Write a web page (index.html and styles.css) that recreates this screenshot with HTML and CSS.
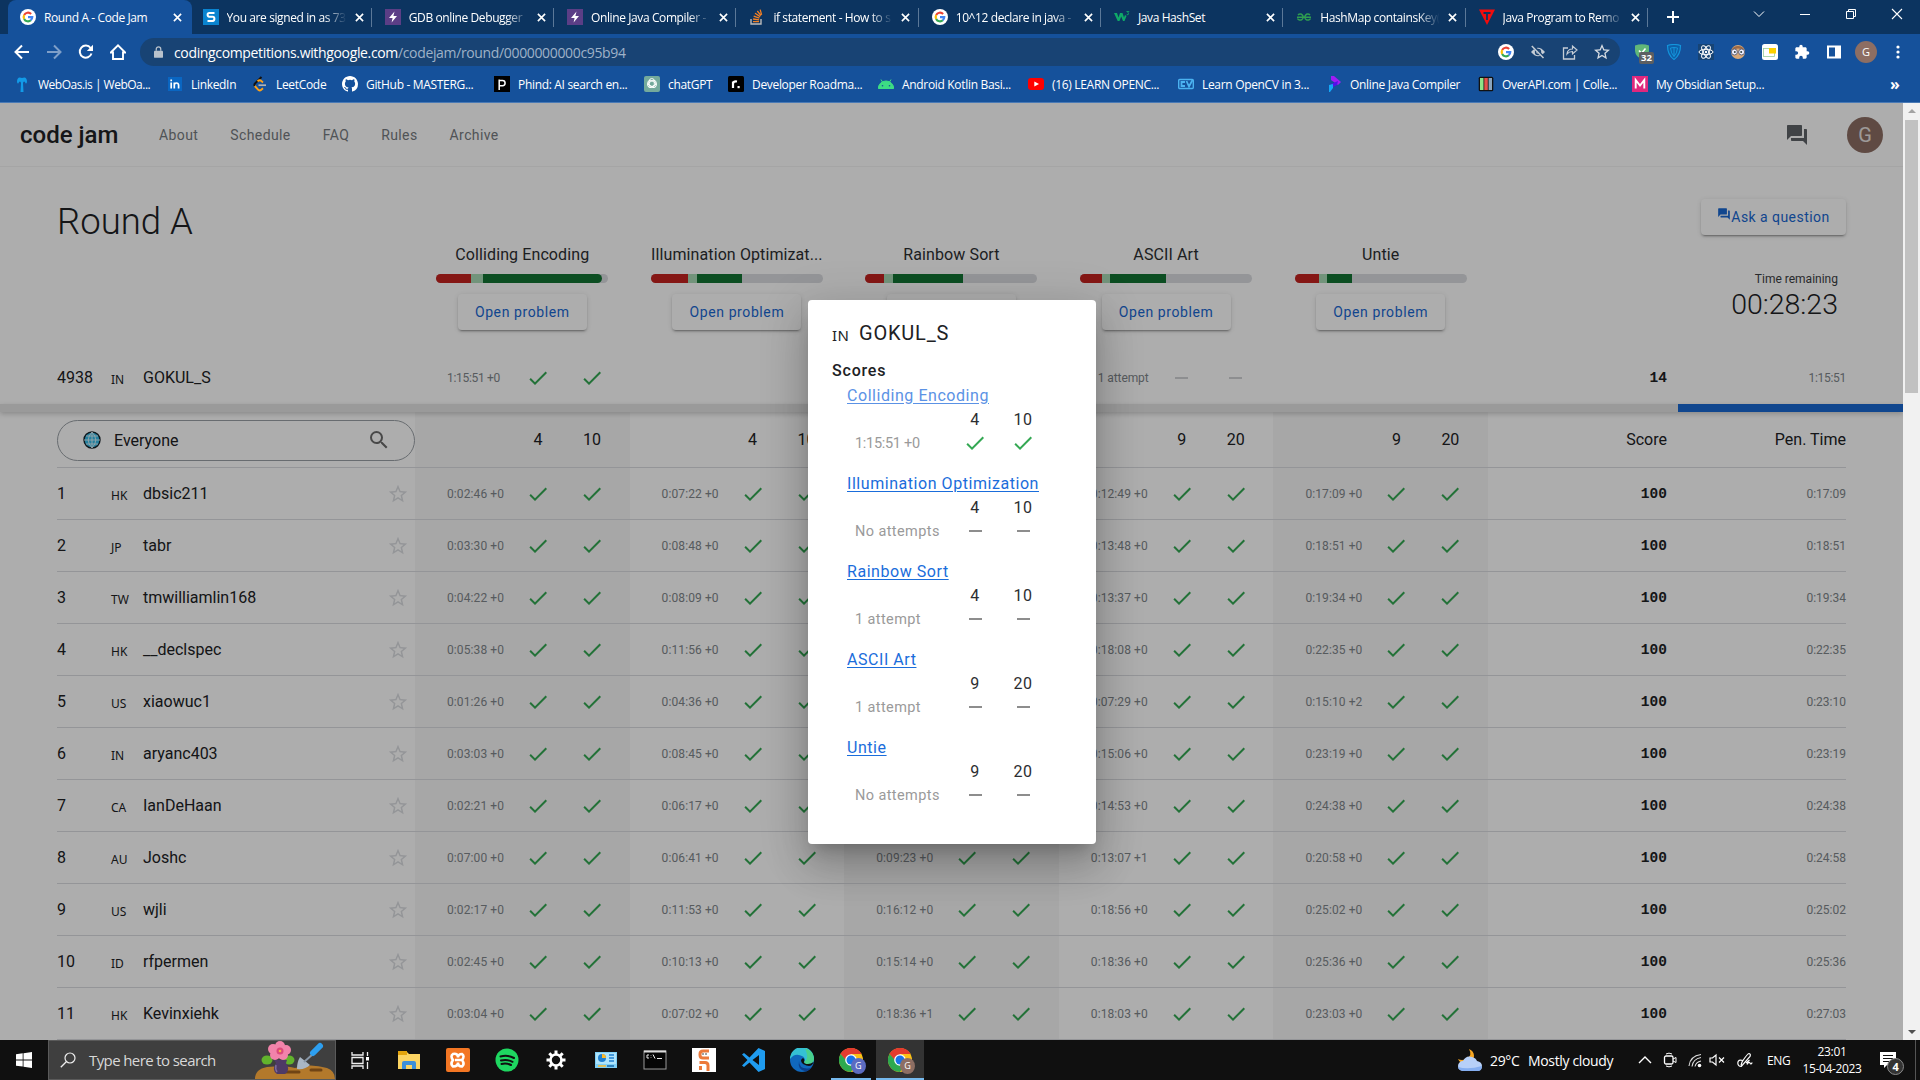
FILE: index.html
```html
<!DOCTYPE html>
<html lang="en">
<head>
<meta charset="utf-8">
<title>Round A - Code Jam</title>
<link rel="stylesheet" href="styles.css">
</head>
<body>
<svg class="sprite" aria-hidden="true">
  <symbol id="google" viewBox="0 0 20 20"><circle cx="10" cy="10" r="10" fill="#fff"/><g fill="none" stroke-width="2.7"><path d="M5.2 7.6A5.4 5.4 0 0 1 13.9 6.2" stroke="#ea4335"/><path d="M5.2 12.4A5.4 5.4 0 0 1 5.2 7.6" stroke="#fbbc05"/><path d="M13.6 14A5.4 5.4 0 0 1 5.2 12.4" stroke="#34a853"/><path d="M10 10.2h5.3A5.4 5.4 0 0 1 13.4 14.1" stroke="#4285f4"/></g></symbol>
  <symbol id="close" viewBox="0 0 10 10"><path d="M1 1l8 8M9 1L1 9" stroke="#fff" stroke-width="1.8"/></symbol>
  <symbol id="bolt" viewBox="0 0 16 16"><rect width="16" height="16" fill="#5b3e86"/><path d="M9.5 2.5L4 9h3.6l-1 4.5L12 7H8.4z" fill="#fff"/></symbol>
  <symbol id="check" viewBox="0 0 24 24"><path d="M9 16.17L4.83 12l-1.42 1.41L9 19 21 7l-1.41-1.41z" fill="#34a853"/></symbol>
  <symbol id="star" viewBox="0 0 24 24"><path d="M22 9.24l-7.19-.62L12 2 9.19 8.63 2 9.24l5.46 4.73L5.82 21 12 17.27 18.18 21l-1.63-7.03L22 9.24zM12 15.4l-3.76 2.27 1-4.28-3.32-2.88 4.38-.38L12 6.1l1.71 4.04 4.38.38-3.32 2.88 1 4.28L12 15.4z"/></symbol>
  <symbol id="chat" viewBox="0 0 24 24"><path d="M21 6h-2v9H6v2c0 .55.45 1 1 1h11l4 4V7c0-.55-.45-1-1-1zm-4 6V3c0-.55-.45-1-1-1H3c-.55 0-1 .45-1 1v14l4-4h10c.55 0 1-.45 1-1z"/></symbol>
  <symbol id="chrome" viewBox="0 0 24 24"><circle cx="12" cy="12" r="12" fill="#fbc116"/><path d="M12 12L1.6 6A12 12 0 0 1 22.4 6H12z" fill="#ea4335"/><path d="M12 0A12 12 0 0 1 22.4 6H12L6 12 1.6 6A12 12 0 0 1 12 0z" fill="#e33b2e"/><path d="M1.6 6A12 12 0 0 0 12 24l5.2-9L12 12H6.8z" fill="#2da94f"/><circle cx="12" cy="12" r="5.8" fill="#fff"/><circle cx="12" cy="12" r="4.5" fill="#1a73e8"/></symbol>
</svg>

<header class="browser">
  <div class="tabstrip">
    <div class="tab active"><svg class="fav"><use href="#google"/></svg><span class="tab-title">Round A - Code Jam</span><svg class="x"><use href="#close"/></svg></div>
    <div class="tab nosep"><svg class="fav" viewBox="0 0 16 16"><rect width="16" height="16" fill="#0a84d0"/><path d="M11.5 4H6.3Q4.6 4 4.6 5.8T6.3 7.8H9.7Q11.4 7.8 11.4 9.8T9.7 12H4.5" fill="none" stroke="#fff" stroke-width="2"/></svg><span class="tab-title fade">You are signed in as 73</span><svg class="x"><use href="#close"/></svg></div>
    <div class="tab"><svg class="fav"><use href="#bolt"/></svg><span class="tab-title fade">GDB online Debugger</span><svg class="x"><use href="#close"/></svg></div>
    <div class="tab"><svg class="fav"><use href="#bolt"/></svg><span class="tab-title fade">Online Java Compiler -</span><svg class="x"><use href="#close"/></svg></div>
    <div class="tab"><svg class="fav" viewBox="0 0 16 16"><path d="M2 10v5h10v-5" fill="none" stroke="#bcbbbb" stroke-width="1.4"/><path d="M4 12.7h6M4.1 10l6 .9M4.7 7.2l5.7 2M6 4.300l5.200 3.300M8.300 2l3.700 4.500M11.200.6l1.400 5.200" stroke="#f48024" stroke-width="1.300"/></svg><span class="tab-title fade">if statement - How to s</span><svg class="x"><use href="#close"/></svg></div>
    <div class="tab"><svg class="fav"><use href="#google"/></svg><span class="tab-title fade">10^12 declare in java -</span><svg class="x"><use href="#close"/></svg></div>
    <div class="tab"><svg class="fav" viewBox="0 0 16 16"><path d="M0 4h3l1.500 4.500L6 4h2.500L10 8.500 11 6l1.500 1-2 5H9L7.200 7.500 5.500 12H3.700z" fill="#0fa968"/><path d="M12.500 2.500h2.400l-1.200 1.400q1.500.4.500 1.700l-1.500.2" fill="none" stroke="#0fa968" stroke-width=".9"/></svg><span class="tab-title">Java HashSet</span><svg class="x"><use href="#close"/></svg></div>
    <div class="tab"><svg class="fav" viewBox="0 0 16 16"><g fill="none" stroke="#2f9e50" stroke-width="1.500"><path d="M2 6A3 3 0 1 1 1.500 9.500M1 8.300h14M14 6A3 3 0 1 0 14.500 9.500"/></g></svg><span class="tab-title fade">HashMap containsKey(</span><svg class="x"><use href="#close"/></svg></div>
    <div class="tab"><svg class="fav" viewBox="0 0 16 16"><path d="M0 .5h16L8 16z" fill="#f20c0c"/><path d="M4.500 4h7M8 4v7" stroke="#0c3460" stroke-width="1.800"/></svg><span class="tab-title fade">Java Program to Remo</span><svg class="x"><use href="#close"/></svg></div>
    <svg class="newtab" viewBox="0 0 14 14"><path d="M7 1v12M1 7h12" stroke="#fff" stroke-width="2"/></svg>
    <div class="wincontrols">
      <svg viewBox="0 0 12 12"><path d="M1 3.500l5 5 5-5" fill="none" stroke="#fff"/></svg>
      <svg viewBox="0 0 12 12"><path d="M1 6.500h10" stroke="#fff"/></svg>
      <svg viewBox="0 0 12 12"><path d="M1.500 3.500h7v7h-7zM3.500 3.500v-2h7v7h-2" fill="none" stroke="#fff"/></svg>
      <svg viewBox="0 0 12 12"><path d="M1 1l10 10M11 1L1 11" stroke="#fff" stroke-width="1.100"/></svg>
    </div>
  </div>
  <div class="toolbar">
    <div class="navicons">
      <svg viewBox="0 0 16 16"><path d="M15 8H2M8 1.500L1.500 8 8 14.500" fill="none" stroke="#fff" stroke-width="2"/></svg>
      <svg viewBox="0 0 16 16" class="dim"><path d="M1 8h13M8 1.500L14.500 8 8 14.500" fill="none" stroke="#fff" stroke-width="2"/></svg>
      <svg viewBox="0 0 16 16"><path d="M13.500 9.500A6 6 0 1 1 12.600 4" fill="none" stroke="#fff" stroke-width="2"/><path d="M15 .8V7H8.800z" fill="#fff"/></svg>
      <svg viewBox="0 0 16 16"><path d="M.8 8.500L8 1.400l7.200 7.100H13V15H3V8.500z" fill="none" stroke="#fff" stroke-width="1.900"/></svg>
    </div>
    <div class="omnibox">
      <svg class="lock" viewBox="0 0 10 13"><rect y="5" width="10" height="8" rx="1" fill="#b9c2cc"/><path d="M2.500 5V3.300a2.500 2.500 0 0 1 5 0V5" fill="none" stroke="#b9c2cc" stroke-width="1.400"/></svg>
      <span class="url"><b>codingcompetitions.withgoogle.com</b>/codejam/round/0000000000c95b94</span>
      <svg class="o" viewBox="0 0 16 16"><use href="#google"/></svg>
      <svg class="o" viewBox="0 0 16 16"><path d="M1 8Q8-.5 15 8Q8 16.500 1 8z" fill="#c5cdd6"/><circle cx="8" cy="8" r="3.200" fill="#18416f"/><circle cx="8" cy="8" r="1.800" fill="#c5cdd6"/><path d="M2 1l12.500 13.500" stroke="#18416f" stroke-width="3"/><path d="M1.800 2l11.700 12" stroke="#c5cdd6" stroke-width="1.500"/></svg>
      <svg class="o" viewBox="0 0 16 16"><path d="M6 4H1.500v11h11v-4" fill="none" stroke="#c5cdd6" stroke-width="1.300"/><path d="M5 10Q5.500 5 10.500 5V2L15 6l-4.500 4V7.500Q7 7.500 5 10z" fill="none" stroke="#c5cdd6" stroke-width="1.200"/></svg>
      <svg class="o star" viewBox="2 2 20 20"><use href="#star" width="24" height="24" fill="#d5dbe2"/></svg>
    </div>
    <div class="extensions">
      <span class="ext"><svg viewBox="0 0 16 16"><path d="M1 1.500Q8-1 15 1.500V7Q14.500 12.500 8 15.500Q1.500 12.500 1 7z" fill="#61b778"/><path d="M5 6.500l2.500 2.800L11.500 4.500" fill="none" stroke="#fff" stroke-width="1.600"/></svg><i class="count">32</i></span>
      <svg viewBox="0 0 16 16"><path d="M1.500 1.500Q8-.5 14.500 1.500Q14.500 11 8 15.500Q1.500 11 1.500 1.500z" fill="#0d5fa8" stroke="#1495dc" stroke-width="1.200"/><path d="M4.500 4Q8 3 11.500 4Q11 9.500 8 12.500Q5 9.500 4.500 4zM8 3.500v9" fill="none" stroke="#1495dc"/></svg>
      <svg viewBox="0 0 16 16"><rect width="16" height="16" fill="#174475"/><g fill="none" stroke="#fff"><ellipse cx="8" cy="8" rx="7" ry="2.700"/><ellipse cx="8" cy="8" rx="7" ry="2.700" transform="rotate(60 8 8)"/><ellipse cx="8" cy="8" rx="7" ry="2.700" transform="rotate(120 8 8)"/></g><circle cx="8" cy="8" r="1.200" fill="#fff"/></svg>
      <svg viewBox="0 0 16 16"><circle cx="8" cy="8" r="7" fill="#d8a878"/><path d="M1.500 6A7 6.500 0 0 1 14.500 6Q8 3 1.500 6z" fill="#9b6a48"/><circle cx="4.400" cy="8" r="3" fill="#eef" stroke="#667"/><circle cx="11.600" cy="8" r="3" fill="#eef" stroke="#667"/><circle cx="4.800" cy="8" r="1" fill="#344"/><circle cx="11.200" cy="8" r="1" fill="#344"/></svg>
      <svg viewBox="0 0 16 16"><rect width="16" height="16" rx="2.500" fill="#fff"/><rect x="1.500" y="4.500" width="11" height="8" fill="none" stroke="#9c9" stroke-width=".8"/><rect x="7" y="4" width="7" height="5.500" fill="#fbd000"/></svg>
      <svg viewBox="0 0 24 24"><path d="M20.500 11H19V7c0-1.100-.9-2-2-2h-4V3.500a2.500 2.500 0 0 0-5 0V5H4c-1.100 0-2 .9-2 2v3.800h1.500a2.700 2.700 0 0 1 0 5.400H2V20c0 1.100.9 2 2 2h3.800v-1.500a2.700 2.700 0 0 1 5.400 0V22H17c1.100 0 2-.9 2-2v-4h1.500a2.500 2.500 0 0 0 0-5z" fill="#fff"/></svg>
      <svg viewBox="0 0 16 16"><path d="M1 1.500h14v13H1zM3 3.500v9h6v-9z" fill="#fff" fill-rule="evenodd"/></svg>
      <span class="profile">G</span>
      <svg viewBox="0 0 16 16"><g fill="#fff"><circle cx="8" cy="3" r="1.600"/><circle cx="8" cy="8" r="1.600"/><circle cx="8" cy="13" r="1.600"/></g></svg>
    </div>
  </div>
  <nav class="bookmarks">
    <span class="bm first"><svg viewBox="0 0 16 16"><path d="M3 6Q3 0 8 2Q13 0 13 6Q12 9 11 6Q9.500 4.500 9 7L9.500 16H6.500L7 7Q6.500 4.500 5 6Q4 9 3 6z" fill="#129be8"/></svg>WebOas.is | WebOa...</span>
    <span class="bm"><svg viewBox="0 0 16 16"><rect x="1" y="1" width="14" height="14" fill="#0a66c2"/><path d="M4.200 6.500v6M7.300 12.500v-6M7.300 9q.3-2 2.200-2t2.100 2.200v3.300M4.200 3.500v1.800" fill="none" stroke="#fff" stroke-width="1.700"/></svg>LinkedIn</span>
    <span class="bm"><svg viewBox="0 0 16 16"><path d="M9.500 1L3 7.500q-1.200 1.300-.2 2.500" fill="none" stroke="#111" stroke-width="1.900"/><path d="M2.800 10l3.500 3.800q1.500 1.300 3 0l1.700-1.500M5.500 5.200q2.500-2 4 0l1.500 1.200" fill="none" stroke="#ffa116" stroke-width="1.900"/><path d="M6.500 9.200H14" stroke="#b3b3b3" stroke-width="1.700"/></svg>LeetCode</span>
    <span class="bm"><svg viewBox="0 0 16 16"><path d="M8 0C3.580 0 0 3.580 0 8c0 3.540 2.290 6.530 5.470 7.590.4.070.55-.17.55-.38 0-.19-.01-.82-.01-1.490-2.010.37-2.530-.49-2.690-.94-.09-.23-.48-.94-.82-1.130-.28-.15-.68-.52-.01-.53.63-.01 1.080.58 1.230.82.72 1.210 1.870.87 2.330.66.07-.52.28-.87.51-1.070-1.780-.2-3.640-.89-3.640-3.950 0-.87.31-1.590.82-2.150-.08-.2-.36-1.020.08-2.120 0 0 .67-.21 2.200.82a7.600 7.600 0 0 1 4 0c1.530-1.040 2.200-.82 2.200-.82.44 1.100.16 1.920.08 2.120.51.56.82 1.270.82 2.150 0 3.070-1.870 3.750-3.650 3.950.29.25.54.73.54 1.480 0 1.070-.01 1.930-.01 2.200 0 .21.15.46.55.38A8 8 0 0 0 16 8c0-4.420-3.580-8-8-8z" fill="#fff"/></svg>GitHub - MASTERG...</span>
    <span class="bm"><svg viewBox="0 0 16 16"><rect width="16" height="16" fill="#000"/><path d="M5.200 14V3.500M5.200 4.500H8.500a2.600 2.600 0 0 1 0 5.200H5.200" fill="none" stroke="#fff" stroke-width="1.500"/></svg>Phind: AI search en...</span>
    <span class="bm"><svg viewBox="0 0 16 16"><rect width="16" height="16" rx="2" fill="#74aa9c"/><g fill="none" stroke="#fff" stroke-width=".9"><rect x="5.300" y="2.500" width="5" height="9" rx="2.500"/><rect x="5.300" y="3.500" width="5" height="9" rx="2.500" transform="rotate(60 8 8)"/><rect x="5.300" y="3.500" width="5" height="9" rx="2.500" transform="rotate(120 8 8)"/></g></svg>chatGPT</span>
    <span class="bm"><svg viewBox="0 0 16 16"><rect width="16" height="16" rx="1.500" fill="#000"/><path d="M5 12V5.500M5 7.500Q5.500 5 9 5.500" fill="none" stroke="#fff" stroke-width="2.200"/><rect x="9.500" y="10" width="2.200" height="2.200" fill="#fff"/></svg>Developer Roadma...</span>
    <span class="bm"><svg viewBox="0 0 16 16"><path d="M.3 12.500A7.700 7.500 0 0 1 15.700 12.500zM3 3.500l2.300 4M13 3.500l-2.300 4" fill="#3ddc84" stroke="#3ddc84"/><circle cx="4.500" cy="9.800" r=".8" fill="#15519b"/><circle cx="11.500" cy="9.800" r=".8" fill="#15519b"/></svg>Android Kotlin Basi...</span>
    <span class="bm"><svg viewBox="0 0 16 16"><rect y="2" width="16" height="12" rx="3" fill="#f00"/><path d="M6.300 5.400L11 8l-4.700 2.600z" fill="#fff"/></svg>(16) LEARN OPENC...</span>
    <span class="bm"><svg viewBox="0 0 16 16"><rect x=".7" y="3.500" width="14.600" height="9" rx="1" fill="none" stroke="#4bb2f0" stroke-width="1.400"/><path d="M7 6H3.500v4H7M8.500 5l2.500 5.500L14.500 4" fill="none" stroke="#4bb2f0" stroke-width="1.800"/></svg>Learn OpenCV in 3...</span>
    <span class="bm"><svg viewBox="0 0 16 16"><path d="M5 0h3l7 6-3 3-7-5z" fill="#a01cf5"/><path d="M12 5l-1 4-6 3 0-4z" fill="#5410e8"/><path d="M3 9l4-1v4l-3 4H3z" fill="#14a7f7"/></svg>Online Java Compiler</span>
    <span class="bm"><svg viewBox="0 0 16 16"><rect x=".7" y=".7" width="14.600" height="14.600" rx="1.500" fill="#111"/><path fill="#8fe388" d="M2 2h3.500v12H2z"/><path fill="#e2504a" d="M6.300 2h3.500v12H6.300z"/><path fill="#8aa4bd" d="M10.600 2H14v12h-3.400z"/></svg>OverAPI.com | Colle...</span>
    <span class="bm"><svg viewBox="0 0 16 16"><rect width="16" height="16" fill="#e0287d"/><path d="M3.700 12.500V4L8 9.500 12.300 4v8.500" fill="none" stroke="#fff" stroke-width="1.900"/></svg>My Obsidian Setup...</span>
    <span class="more">»</span>
  </nav>
</header>

<main class="viewport">
  <div class="page">
    <header class="siteheader">
      <span class="logo">code jam</span>
      <nav class="sitenav"><a>About</a><a>Schedule</a><a>FAQ</a><a>Rules</a><a>Archive</a></nav>
      <svg class="chaticon"><use href="#chat"/></svg>
      <span class="avatar">G</span>
    </header>

    <section class="roundhead">
      <div class="grid summary">
        <h1>Round A</h1>
        <div class="problem"><span class="pname">Colliding Encoding</span><div class="bar round-end"><i class="wrong"></i><i class="part"></i><i class="full"></i></div><button>Open problem</button></div>
        <div class="problem"><span class="pname">Illumination Optimizat...</span><div class="bar b2"><i class="wrong"></i><i class="part"></i><i class="full"></i></div><button>Open problem</button></div>
        <div class="problem"><span class="pname">Rainbow Sort</span><div class="bar b3"><i class="wrong"></i><i class="part"></i><i class="full"></i></div><button>Open problem</button></div>
        <div class="problem"><span class="pname">ASCII Art</span><div class="bar b4"><i class="wrong"></i><i class="part"></i><i class="full"></i></div><button>Open problem</button></div>
        <div class="problem"><span class="pname">Untie</span><div class="bar b5"><i class="wrong"></i><i class="part"></i><i class="full"></i></div><button>Open problem</button></div>
        <div class="clock">
          <button class="ask"><svg><use href="#chat"/></svg>Ask a question</button>
          <span class="remaining">Time remaining</span>
          <span class="countdown">00:28:23</span>
        </div>
      </div>
      <div class="grid me" id="me"></div>
    </section>
    <div class="timeline"><i></i></div>

    <section class="board" id="board">
      <div class="grid row head">
        <div class="filter">
          <svg class="globe" viewBox="0 0 18 18"><circle cx="9" cy="9" r="8" fill="#35bdea" stroke="#16222a" stroke-width="1.400"/><path d="M9 1v16M1 9h16M3 5h12M3 13h12M9 1Q1.500 9 9 17M9 1Q16.500 9 9 17" fill="none" stroke="#dff4fb" stroke-width=".9"/></svg>
          <span>Everyone</span>
          <svg class="mag" viewBox="0 0 24 24"><path d="M15.500 14h-.79l-.28-.27A6.470 6.470 0 0 0 16 9.500 6.500 6.500 0 1 0 9.500 16c1.610 0 3.090-.59 4.230-1.570l.27.28v.79l5 4.990L20.490 19l-4.990-5zm-6 0C7.010 14 5 11.990 5 9.500S7.010 5 9.500 5 14 7.010 14 9.500 11.990 14 9.500 14z" fill="#6b6b6b"/></svg>
        </div>
        <div class="cell shade"><span></span><b>4</b><b>10</b></div>
        <div class="cell"><span></span><b>4</b><b>10</b></div>
        <div class="cell shade"><span></span><b>4</b><b>10</b></div>
        <div class="cell"><span></span><b>9</b><b>20</b></div>
        <div class="cell shade"><span></span><b>9</b><b>20</b></div>
        <div class="right">Score</div>
        <div class="right">Pen. Time</div>
      </div>
    </section>
    <div class="backdrop"></div>
    <section class="dialog">
      <h2><small>IN</small>GOKUL_S</h2>
      <h3>Scores</h3>
      <div id="scores"></div>
    </section>
  </div>
  <div class="scrollbar"><i class="up"></i><i class="thumb"></i><i class="down"></i></div>
</main>

<footer class="taskbar">
  <div class="start"><svg viewBox="0 0 16 16"><path d="M0 2.300L6.700 1.300v6.200H0zM7.500 1.200L16 0v7.500H7.500zM0 8.400h6.700v6.200L0 13.700zM7.500 8.400H16V16l-8.500-1.200z" fill="#fff"/></svg></div>
  <div class="search">
    <svg class="sicon" viewBox="0 0 16 16"><circle cx="10" cy="6" r="5" fill="none" stroke="#eee" stroke-width="1.200"/><path d="M6.500 9.500L.8 15.200" stroke="#eee" stroke-width="1.300"/></svg>
    <span>Type here to search</span>
    <svg class="art" viewBox="0 0 80 38"><path d="M0 38Q0 28 12 26Q30 24 40 27Q55 22 72 27Q80 30 80 38z" fill="#b3792b"/><path d="M30 31h14M56 29h10" stroke="#704414" stroke-width="3" stroke-linecap="round"/><ellipse cx="12" cy="19" rx="5.500" ry="4.500" fill="#62b32c"/><ellipse cx="34" cy="19" rx="5.500" ry="4.500" fill="#62b32c"/><path d="M19 19h13l-1 3q5 7-1 11h-8q-6-4-1-11z" fill="#4e3a66"/><path d="M21 24q-1 4 1 7" stroke="#7d6a9c" stroke-width="1.500" fill="none"/><g fill="#f283aa"><circle cx="18" cy="8" r="5"/><circle cx="25" cy="5" r="5"/><circle cx="31" cy="9" r="5"/><circle cx="28" cy="14" r="5"/><circle cx="20" cy="14" r="5"/></g><circle cx="25" cy="10" r="3.500" fill="#dc4a7c"/><circle cx="25" cy="10" r="1.300" fill="#f8b04a"/><path d="M45 16l10 8q-5 5-13 4 0-7 3-12z" fill="#a9b6c4"/><path d="M49 21L58 13" stroke="#8998a8" stroke-width="2"/><path d="M58 12l7-7" stroke="#2d9ff0" stroke-width="6" stroke-linecap="round"/></svg>
  </div>
  <div class="apps">
    <span><svg viewBox="0 0 24 24"><path d="M4 4v3h11V4M4 21v-3h11v3M4 9.500h11v6H4zM19.500 4v4M19.500 14v7" fill="none" stroke="#eee" stroke-width="1.300"/><rect x="18" y="9" width="3" height="3.500" fill="#fff"/></svg></span>
    <span><svg viewBox="0 0 24 24"><path d="M1 4h9l2 2h11v15H1z" fill="#fcd462"/><path d="M1 3h9v4H1z" fill="#e3a40d"/><path d="M5 21v-6q0-2 2-2h10q2 0 2 2v6h-4v-4H9v4z" fill="#3d8fd8"/></svg></span>
    <span><svg viewBox="0 0 24 24"><rect width="24" height="24" rx="2" fill="#f37623"/><path d="M7 6q5-1 5 3.500Q12 6 16 6q3 2 0 6 3 4 0 6.500-4 0-4-4 0 4-5 4-3-2.500 0-6.500-3-4 0-6zM9 12h6" fill="none" stroke="#fff" stroke-width="2.600"/></svg></span>
    <span><svg viewBox="0 0 24 24"><circle cx="12" cy="12" r="11.500" fill="#1ed760"/><path d="M5.500 8.500q7-2 13.500 1.500M6 12.500q6-1.700 11.500 1.300M6.500 16q5-1.300 9.500 1" fill="none" stroke="#101010" stroke-width="2" stroke-linecap="round"/></svg></span>
    <span><svg viewBox="0 0 24 24"><circle cx="12" cy="12" r="5.500" fill="none" stroke="#fff" stroke-width="2.600"/><path d="M12 2.500v4M12 17.500v4M2.500 12h4M17.500 12h4M5.300 5.300L8 8M16 16l2.700 2.700M18.700 5.300L16 8M8 16l-2.700 2.700" stroke="#fff" stroke-width="3"/></svg></span>
    <span><svg viewBox="0 0 24 24"><rect x="1" y="4" width="22" height="16" fill="#7fd0f7"/><path d="M2 5h20v11H2z" fill="#aee4fc"/><circle cx="8" cy="10" r="4" fill="#1f7fd0"/><path d="M8 10V6a4 4 0 0 1 4 4z" fill="#fbb929"/><path d="M15 7h5M15 10h5M15 13h5" stroke="#1f7fd0" stroke-width="1.500"/><path d="M4 18h8" stroke="#fbb929" stroke-width="1.500"/><path d="M13 18h7" stroke="#1769aa" stroke-width="1.500"/></svg></span>
    <span><svg viewBox="0 0 24 24"><rect x="1" y="3" width="22" height="18" fill="#050505" stroke="#999"/><path d="M1 3.500h22" stroke="#ddd" stroke-width="2"/><path d="M6 7H4v3h2M8 7.500v.5M8 9.500v.5M10 6.500l2 4M14 10.500h5" fill="none" stroke="#eee"/></svg></span>
    <span><svg viewBox="0 0 24 24"><rect width="24" height="24" fill="#fff"/><g fill="none" stroke="#ec7a3b" stroke-width="3"><path d="M17 3H11q-3 0-3 3v1q0 3 3 3h6"/><path d="M7.500 14.500H13q3 0 3 3V23M8.500 18v4"/></g><path d="M11 5v2M14 5v2" stroke="#444"/></svg></span>
    <span><svg viewBox="0 0 24 24"><path d="M17.500 0L24 3v18l-6.500 3-9-9.500L3 19l-2-1.500L6.500 12 1 6.500 3 5l5.500 4.500zM18 7l-6.500 5 6.500 5z" fill="#1f9cf0" fill-rule="evenodd"/></svg></span>
    <span><svg viewBox="0 0 24 24"><circle cx="12" cy="12" r="12" fill="#1068bd"/><path d="M0 11A12 12 0 0 1 24 11q0 5-6 5-4 0-4-2 2-3-1-5.500Q5 4 0 11z" fill="#35c1d4"/><path d="M15 .5Q24 3 24 11q0 5-6 5-4 0-4-2 6-3 1-13.500z" fill="#52d66c" opacity=".7"/><path d="M9 13q0 8 9 7.500 3-.5 4-1.500-2 3-6 4.500Q7 22 9 13z" fill="#0b3f8c"/><path d="M13 16Q9 12 13 10q2 1 1 4 0 2 4 2 3 0 5.500-2-2 7-10.500 2z" fill="#101010"/></svg></span>
    <span class="open"><svg><use href="#chrome"/></svg><i class="who">G</i></span>
    <span class="open current"><svg><use href="#chrome"/></svg><i class="who brown">G</i></span>
  </div>
  <div class="tray">
    <svg class="weather" viewBox="0 0 26 24"><path d="M12 1q4 7-3 10-4 2-8 0 2 5 8 5 8-1 8-8 0-5-5-7z" fill="#f5a623"/><path d="M6 23a5 5 0 0 1 0-10q3-6 9-4 4 1 5 4 5 1 5 5t-4 5z" fill="#b7d0f8"/><path d="M6 23q-5-1-5-4 10 3 24-1 0 5-4 5z" fill="#85aef0"/></svg>
    <span class="temp">29°C</span><span class="cond">Mostly cloudy</span>
    <svg class="t caret" viewBox="0 0 16 16"><path d="M2 11l6-6 6 6" fill="none" stroke="#fff" stroke-width="1.400"/></svg>
    <svg class="t cam" viewBox="0 0 16 16"><rect x="2.500" y="4" width="8.500" height="8" rx="1.500" fill="none" stroke="#fff" stroke-width="1.300"/><path d="M11 7l3-1.500v5L11 9M4 2Q7 .300 10 2M4 14q3 1.700 6 0" fill="none" stroke="#fff"/></svg>
    <svg class="t wifi" viewBox="0 0 16 16"><g fill="none" stroke="#ddd" stroke-width="1.100"><path d="M2 14Q3 4 14 2.500M5 14.500Q6 7 14 5.500M8 14.500Q9 10 14 9"/></g><circle cx="12.500" cy="13.500" r="1.800" fill="#fff"/></svg>
    <svg class="t vol" viewBox="0 0 16 16"><path d="M1 6h2.500L7 3v10L3.500 10H1z" fill="none" stroke="#fff" stroke-width="1.200"/><path d="M10 5.500l5 5M15 5.500l-5 5" stroke="#fff" stroke-width="1.200"/></svg>
    <svg class="t ink" viewBox="0 0 16 16"><path d="M6 8.500Q1 7 .8 11q.2 3.500 3.500 3.500L13 4.500Q14 2 12 1.500 10.500 1.500 5 10l-1 3.500M9 11l3.500-3M10 12.500q2-3.500 3-1.500t2.200-.5" fill="none" stroke="#fff" stroke-width="1.200"/></svg>
    <span class="lang">ENG</span>
    <span class="datetime">23:01<br>15-04-2023</span>
    <span class="notif"><svg viewBox="0 0 16 16"><path d="M0 0h16v13H7l-3 3v-3H0z" fill="#fff"/><path d="M3 3.500h10M3 6.500h10M3 9.500h6" stroke="#101010" stroke-width="1.200"/></svg><i>4</i></span>
    <i class="peek"></i>
  </div>
</footer>
<script src="app.js"></script>
</body>
</html>
```
FILE: styles.css
```css
* { box-sizing: border-box; }
body {
  margin: 0; width: 1920px; height: 1080px; overflow: hidden;
  display: flex; flex-direction: column;
  font-family: Roboto, "Liberation Sans", sans-serif; color: #202124;
}
.sprite { display: none; }
svg { display: block; flex: none; }
i { font-style: normal; }
button { font: inherit; border: 0; }

/* browser chrome */
.browser { height: 103px; background: #15519b; border-bottom: 1px solid #4a7ab5; color: #fff; font-family: "Open Sans", "Noto Sans", sans-serif; }
.tabstrip { height: 34px; background: #0c3460; display: flex; padding-left: 8px; }
.tab { width: 182.300px; height: 34px; display: flex; align-items: center; padding-left: 12px; border-right: 1px solid transparent; background: linear-gradient(#5b7898, #5b7898) right 8px / 1px 19px no-repeat; }
.tab:not(.active) { padding-left: 12px; }
.tab.active { width: 184px; margin-right: -1.500px; background: #15519b; border-radius: 8px 8px 0 0; }
.tab.active .x { margin-left: 7px; }
.fav { width: 16px; height: 16px; margin-right: 8px; }
.tab-title { width: 122px; font-size: 12px; letter-spacing: -0.400px; white-space: nowrap; }
.fade { -webkit-mask-image: linear-gradient(90deg, #000 80%, transparent 98%); mask-image: linear-gradient(90deg, #000 80%, transparent 98%); }
.x { width: 9px; height: 9px; margin-left: 6px; }
.newtab { width: 14px; height: 14px; margin: 10px 0 0 17px; }
.wincontrols { margin-left: auto; display: flex; gap: 34px; padding: 8px 17px 0 0; }
.wincontrols svg { width: 12px; height: 12px; }
.toolbar { height: 36px; display: flex; align-items: center; padding-left: 14px; }
.navicons { display: flex; gap: 16px; width: 126px; }
.navicons svg { width: 16px; height: 16px; }
.dim { opacity: .45; }
.omnibox { width: 1480px; height: 28px; border-radius: 14px; background: #184374; display: flex; align-items: center; padding: 0 10px 0 14px; }
.lock { width: 9px; height: 12px; }
.url { flex: 1; margin-left: 11px; font-size: 14px; letter-spacing: -0.350px; color: #9fb2c8; white-space: nowrap; }
.url b { font-weight: 400; color: #fff; }
.o { width: 16px; height: 16px; margin-left: 16px; }
.extensions { display: flex; align-items: center; gap: 16px; margin-left: 14px; }
.extensions svg { width: 16px; height: 16px; }
.ext { position: relative; }
.count { position: absolute; left: 5px; top: 8px; width: 15px; height: 12px; border-radius: 2px; background: #5c5f62; font: 700 9.500px/12px "Open Sans", sans-serif; text-align: center; }
.profile { width: 22px; height: 22px; margin: 0 -3px; border-radius: 50%; background: #8d6e63; font-size: 11px; line-height: 22px; text-align: center; }
.bookmarks { height: 28px; display: grid; grid-template-columns: 153px 85px 90px 152px 150px 84px 150px 150px 150px 148px 152px 154px 1fr 30px; align-items: center; padding-left: 14px; font-size: 12px; letter-spacing: -0.320px; white-space: nowrap; }
.bm { display: flex; align-items: center; gap: 8px; }
.bm.first { letter-spacing: -0.500px; }
.bm svg { width: 16px; height: 16px; }
.more { font-size: 16px; font-weight: 700; line-height: 20px; }

/* page */
.viewport { height: 937px; display: flex; }
.page { position: relative; width: 1903px; background: #fff; overflow: hidden; }
.siteheader { height: 64px; display: flex; align-items: center; padding: 0 20px; border-bottom: 1px solid #f4f4f4; }
.logo { width: 139px; font-size: 24px; font-weight: 500; }
.sitenav { display: flex; gap: 32px; flex: 1; font-size: 14px; letter-spacing: .4px; color: #767b80; }
.chaticon { width: 24px; height: 24px; fill: #5f6368; margin-right: 38px; }
.avatar { width: 36px; height: 36px; border-radius: 50%; background: #8d6e63; color: #e8e3e1; font-size: 20px; line-height: 36px; text-align: center; }
.grid { display: grid; grid-template-columns: 358px repeat(5, 214.600px) 179px 179px; margin: 0 57px; width: 1789px; }
.roundhead { height: 237px; }
.summary { height: 187px; }
h1 { margin: 33px 0 0; font-size: 36.500px; line-height: 44px; font-weight: 300; letter-spacing: 0; }
.problem { display: flex; flex-direction: column; align-items: center; padding-top: 78px; }
.pname { font-size: 16px; line-height: 20px; letter-spacing: .1px; white-space: nowrap; color: #2c2e31; }
.bar { width: 172px; height: 9px; margin: 9px 0 11px; border-radius: 5px; background: #dadce0; display: flex; overflow: hidden; }
.wrong { background: #c5221f; width: 35px; }
.part { background: #a8dab5; width: 12px; }
.full { background: #137333; width: 119px; }
.round-end .full { border-radius: 0 5px 5px 0; }
.b2 .wrong { width: 37px; } .b2 .part { width: 9px; } .b2 .full { width: 45px; }
.b3 .wrong { width: 19px; } .b3 .part { width: 9px; } .b3 .full { width: 70px; }
.b4 .wrong { width: 22px; } .b4 .part { width: 8px; } .b4 .full { width: 56px; }
.b5 .wrong { width: 24px; } .b5 .part { width: 8px; } .b5 .full { width: 25px; }
.problem button, .ask { width: 129px; height: 36px; padding: 0; border-radius: 4px; background: #fff; color: #1967d2; font-size: 14px; font-weight: 400; letter-spacing: .6px; box-shadow: 0 3px 1px -2px rgba(0,0,0,.2), 0 2px 2px rgba(0,0,0,.14), 0 1px 5px rgba(0,0,0,.12); }
.clock { grid-column: span 2; display: flex; flex-direction: column; align-items: flex-end; padding-top: 32px; }
.clock .ask { width: 145px; display: flex; align-items: center; justify-content: center; letter-spacing: .450px; }
.ask svg { width: 14px; height: 14px; fill: #1967d2; margin-top: -6px; }
.remaining { margin: 36px 8px 0 0; font-size: 12px; line-height: 16px; color: #3c4043; }
.countdown { margin-right: 8px; font-size: 28.500px; line-height: 36px; font-weight: 300; }
.me { height: 47px; align-items: center; }
.timeline { height: 8px; background: #e4e4e4; display: flex; justify-content: flex-end; box-shadow: 0 2px 5px rgba(0,0,0,.2); position: relative; }
.timeline i { width: 225px; background: #1967d2; }
.row { height: 52px; border-bottom: 1px solid #dadce0; align-items: stretch; }
.head { height: 56px; }
.cell { display: grid; grid-template-columns: 96px 54px 54px; align-items: center; justify-items: center; padding-top: 1px; }
.head .cell { padding-top: 0; }
.shade { background: #f7f7f7; }
.cell span { justify-self: start; margin-left: 32px; font-size: 12px; letter-spacing: .1px; color: #80868b; white-space: nowrap; }
.me .cell span, .me .pen { letter-spacing: -0.300px; }
.me .cell .tries { margin-left: 39px; letter-spacing: -0.100px; }
.cell b { font-size: 16px; font-weight: 400; }
.cell svg { width: 24px; height: 24px; }
.dash { width: 13px; height: 2px; background: #d0d2d4; }
.who-cell { display: grid; grid-template-columns: 54px 32px 1fr 34px; align-items: center; font-size: 16px; }
.who-cell small { font: 12px "Noto Sans", sans-serif; padding-top: 3px; }
.who-cell svg { width: 22px; height: 22px; fill: #dadce0; margin-left: 6px; }
.right { display: flex; align-items: center; justify-content: flex-end; font-size: 16px; }
.score { font: 700 14.500px "Liberation Mono", monospace; }
.pen { font-size: 12px; color: #80868b; }
.filter { height: 41px; margin-top: 8px; border: 1px solid #9aa0a6; border-radius: 21px; display: flex; align-items: center; padding: 0 0 1px 25px; font-size: 16px; }
.globe { width: 18px; height: 18px; margin-right: 13px; }
.mag { width: 24px; height: 24px; margin: 0 23px 0 auto; }

.backdrop { position: absolute; inset: 0; background: rgba(0,0,0,.32); }
.dialog { position: absolute; left: 808px; top: 197px; width: 288px; height: 544px; padding: 20px 24px; border-radius: 4px; background: #fff; box-shadow: 0 11px 15px -7px rgba(0,0,0,.2), 0 24px 38px 3px rgba(0,0,0,.14), 0 9px 46px 8px rgba(0,0,0,.12); letter-spacing: .5px; }
.dialog h2 { margin: 0; font-size: 20px; line-height: 27px; font-weight: 400; display: flex; letter-spacing: .8px; }
.dialog h2 small { font: 15px/30px "Noto Sans", sans-serif; letter-spacing: .5px; width: 27px; }
.dialog h3 { margin: 9px 0 0; font-size: 16px; line-height: 24px; font-weight: 500; letter-spacing: .8px; }
.dialog section { height: 88px; padding-left: 15px; display: grid; grid-template-columns: 104px 48px 48px; grid-template-rows: 24px 24px 24px; align-items: center; justify-items: center; font-size: 16px; color: #2c2e31; }
.dialog a { grid-column: 1 / -1; justify-self: start; color: #1a6ddb; text-decoration: underline; text-underline-offset: 2px; letter-spacing: .550px; }
.dialog section:first-child a { color: #5b92e5; }
.dialog em { font-style: normal; justify-self: start; margin-left: 8px; font-size: 14.500px; color: #9a9a9a; white-space: nowrap; letter-spacing: .4px; }
.dialog em.t { letter-spacing: -0.300px; }
.dialog section svg { width: 24px; height: 24px; }
.dialog .dash { background: #8d8d8d; }

.scrollbar { width: 17px; background: #f1f1f1; display: flex; flex-direction: column; align-items: center; }
.up, .down { border: 4px solid transparent; }
.up { margin: 2px 0 7px; border-bottom-color: #a3a3a3; }
.thumb { width: 13px; height: 273px; background: #c1c1c1; }
.down { margin: auto 0 2px; border-top-color: #505050; }

/* taskbar */
.taskbar { height: 40px; background: #101010; color: #fff; display: flex; font-family: "Open Sans", sans-serif; }
.start { width: 48px; display: grid; place-items: center; }
.start svg { width: 16px; height: 16px; }
.search { width: 288px; border: 1px solid #5a5a5a; background: #3f3f3f; display: flex; align-items: center; padding-left: 11px; font-size: 15px; letter-spacing: -0.600px; color: #d8d8d8; }
.sicon { width: 16px; height: 16px; margin-right: 13px; }
.art { width: 80px; height: 38px; margin-left: auto; }
.apps { display: flex; margin-left: -1px; }
.apps span { position: relative; width: 49.200px; display: grid; place-items: center; }
.apps svg { width: 24px; height: 24px; }
.apps .open { background: linear-gradient(#76b9ed, #76b9ed) center bottom / 40px 2px no-repeat; }
.apps .current { width: 48px; background: linear-gradient(#76b9ed, #76b9ed) bottom / 48px 2px no-repeat, #333; }
.who { position: absolute; left: 24px; top: 18px; width: 15px; height: 16px; border-radius: 50%; background: #5c6bc0; font-size: 9px; line-height: 16px; text-align: center; }
.brown { background: #8d6e63; }
.tray { margin-left: auto; display: flex; align-items: center; width: 465px; font-size: 14px; letter-spacing: -0.350px; white-space: nowrap; }
.weather { width: 26px; height: 24px; margin: 0 7px 0 2px; }
.temp { width: 38px; }
.cond { width: 109px; }
.t { width: 16px; height: 16px; }
.cam { margin-left: 9px; }
.wifi { margin-left: 9px; }
.vol { margin-left: 6px; }
.ink { margin-left: 12px; }
.lang { font-size: 12px; margin-left: 14px; width: 29px; }
.datetime { width: 72px; font-size: 12px; line-height: 17px; text-align: center; letter-spacing: -0.350px; }
.notif { position: relative; margin-left: 12px; }
.notif svg { width: 16px; height: 16px; }
.notif i { position: absolute; left: 7px; top: 6px; width: 17px; height: 17px; border: 1px solid #8a8a8a; border-radius: 50%; background: #333; font-size: 11px; font-weight: 700; line-height: 15px; text-align: center; }
.peek { width: 1px; height: 40px; background: #555; margin: 0 4px 0 auto; }
```
FILE: app.js
```js
const check = '<svg><use href="#check"/></svg>';
const dash = '<i class="dash"></i>';
const star = '<svg><use href="#star"/></svg>';

const cell = (time, shade, solved = true) => {
  if (time === null) return `<div class="cell${shade ? ' shade' : ''}"></div>`;
  const mark = solved ? check : dash;
  return `<div class="cell${shade ? ' shade' : ''}"><span class="${solved ? '' : 'tries'}">${time}</span>${mark}${mark}</div>`;
};

const person = (rank, country, name, starred) =>
  `<div class="who-cell"><span>${rank}</span><small>${country}</small><span>${name}</span>${starred ? star : ''}</div>`;

const totals = (score, pen) =>
  `<div class="right score">${score}</div><div class="right pen">${pen}</div>`;

const rows = [
  ['HK', 'dbsic211', '0:02:46 +0', '0:07:22 +0', '', '0:12:49 +0', '0:17:09 +0', '0:17:09'],
  ['JP', 'tabr', '0:03:30 +0', '0:08:48 +0', '', '0:13:48 +0', '0:18:51 +0', '0:18:51'],
  ['TW', 'tmwilliamlin168', '0:04:22 +0', '0:08:09 +0', '', '0:13:37 +0', '0:19:34 +0', '0:19:34'],
  ['HK', '__declspec', '0:05:38 +0', '0:11:56 +0', '', '0:18:08 +0', '0:22:35 +0', '0:22:35'],
  ['US', 'xiaowuc1', '0:01:26 +0', '0:04:36 +0', '', '0:07:29 +0', '0:15:10 +2', '0:23:10'],
  ['IN', 'aryanc403', '0:03:03 +0', '0:08:45 +0', '', '0:15:06 +0', '0:23:19 +0', '0:23:19'],
  ['CA', 'IanDeHaan', '0:02:21 +0', '0:06:17 +0', '', '0:14:53 +0', '0:24:38 +0', '0:24:38'],
  ['AU', 'Joshc', '0:07:00 +0', '0:06:41 +0', '0:09:23 +0', '0:13:07 +1', '0:20:58 +0', '0:24:58'],
  ['US', 'wjli', '0:02:17 +0', '0:11:53 +0', '0:16:12 +0', '0:18:56 +0', '0:25:02 +0', '0:25:02'],
  ['ID', 'rfpermen', '0:02:45 +0', '0:10:13 +0', '0:15:14 +0', '0:18:36 +0', '0:25:36 +0', '0:25:36'],
  ['HK', 'Kevinxiehk', '0:03:04 +0', '0:07:02 +0', '0:18:36 +1', '0:18:03 +0', '0:23:03 +0', '0:27:03'],
];

document.getElementById('board').insertAdjacentHTML('beforeend', rows.map((r, i) =>
  `<div class="grid row">${person(i + 1, r[0], r[1], true)}` +
  r.slice(2, 7).map((t, c) => cell(t, c % 2 === 0)).join('') +
  totals(100, r[7]) + '</div>').join(''));

document.getElementById('me').innerHTML =
  person(4938, 'IN', 'GOKUL_S', false) +
  cell('1:15:51 +0') + cell(null) + cell(null) +
  cell('1 attempt', false, false) + cell(null) +
  totals(14, '1:15:51');

const problems = [
  ['Colliding Encoding', 4, 10, '1:15:51 +0', true],
  ['Illumination Optimization', 4, 10, 'No attempts', false],
  ['Rainbow Sort', 4, 10, '1 attempt', false],
  ['ASCII Art', 9, 20, '1 attempt', false],
  ['Untie', 9, 20, 'No attempts', false],
];
document.getElementById('scores').innerHTML = problems.map(([name, a, b, result, ok]) => {
  const mark = ok ? check : dash;
  return `<section><a>${name}</a><span></span><span>${a}</span><span>${b}</span><em class="${ok ? 't' : ''}">${result}</em>${mark}${mark}</section>`;
}).join('');
```
